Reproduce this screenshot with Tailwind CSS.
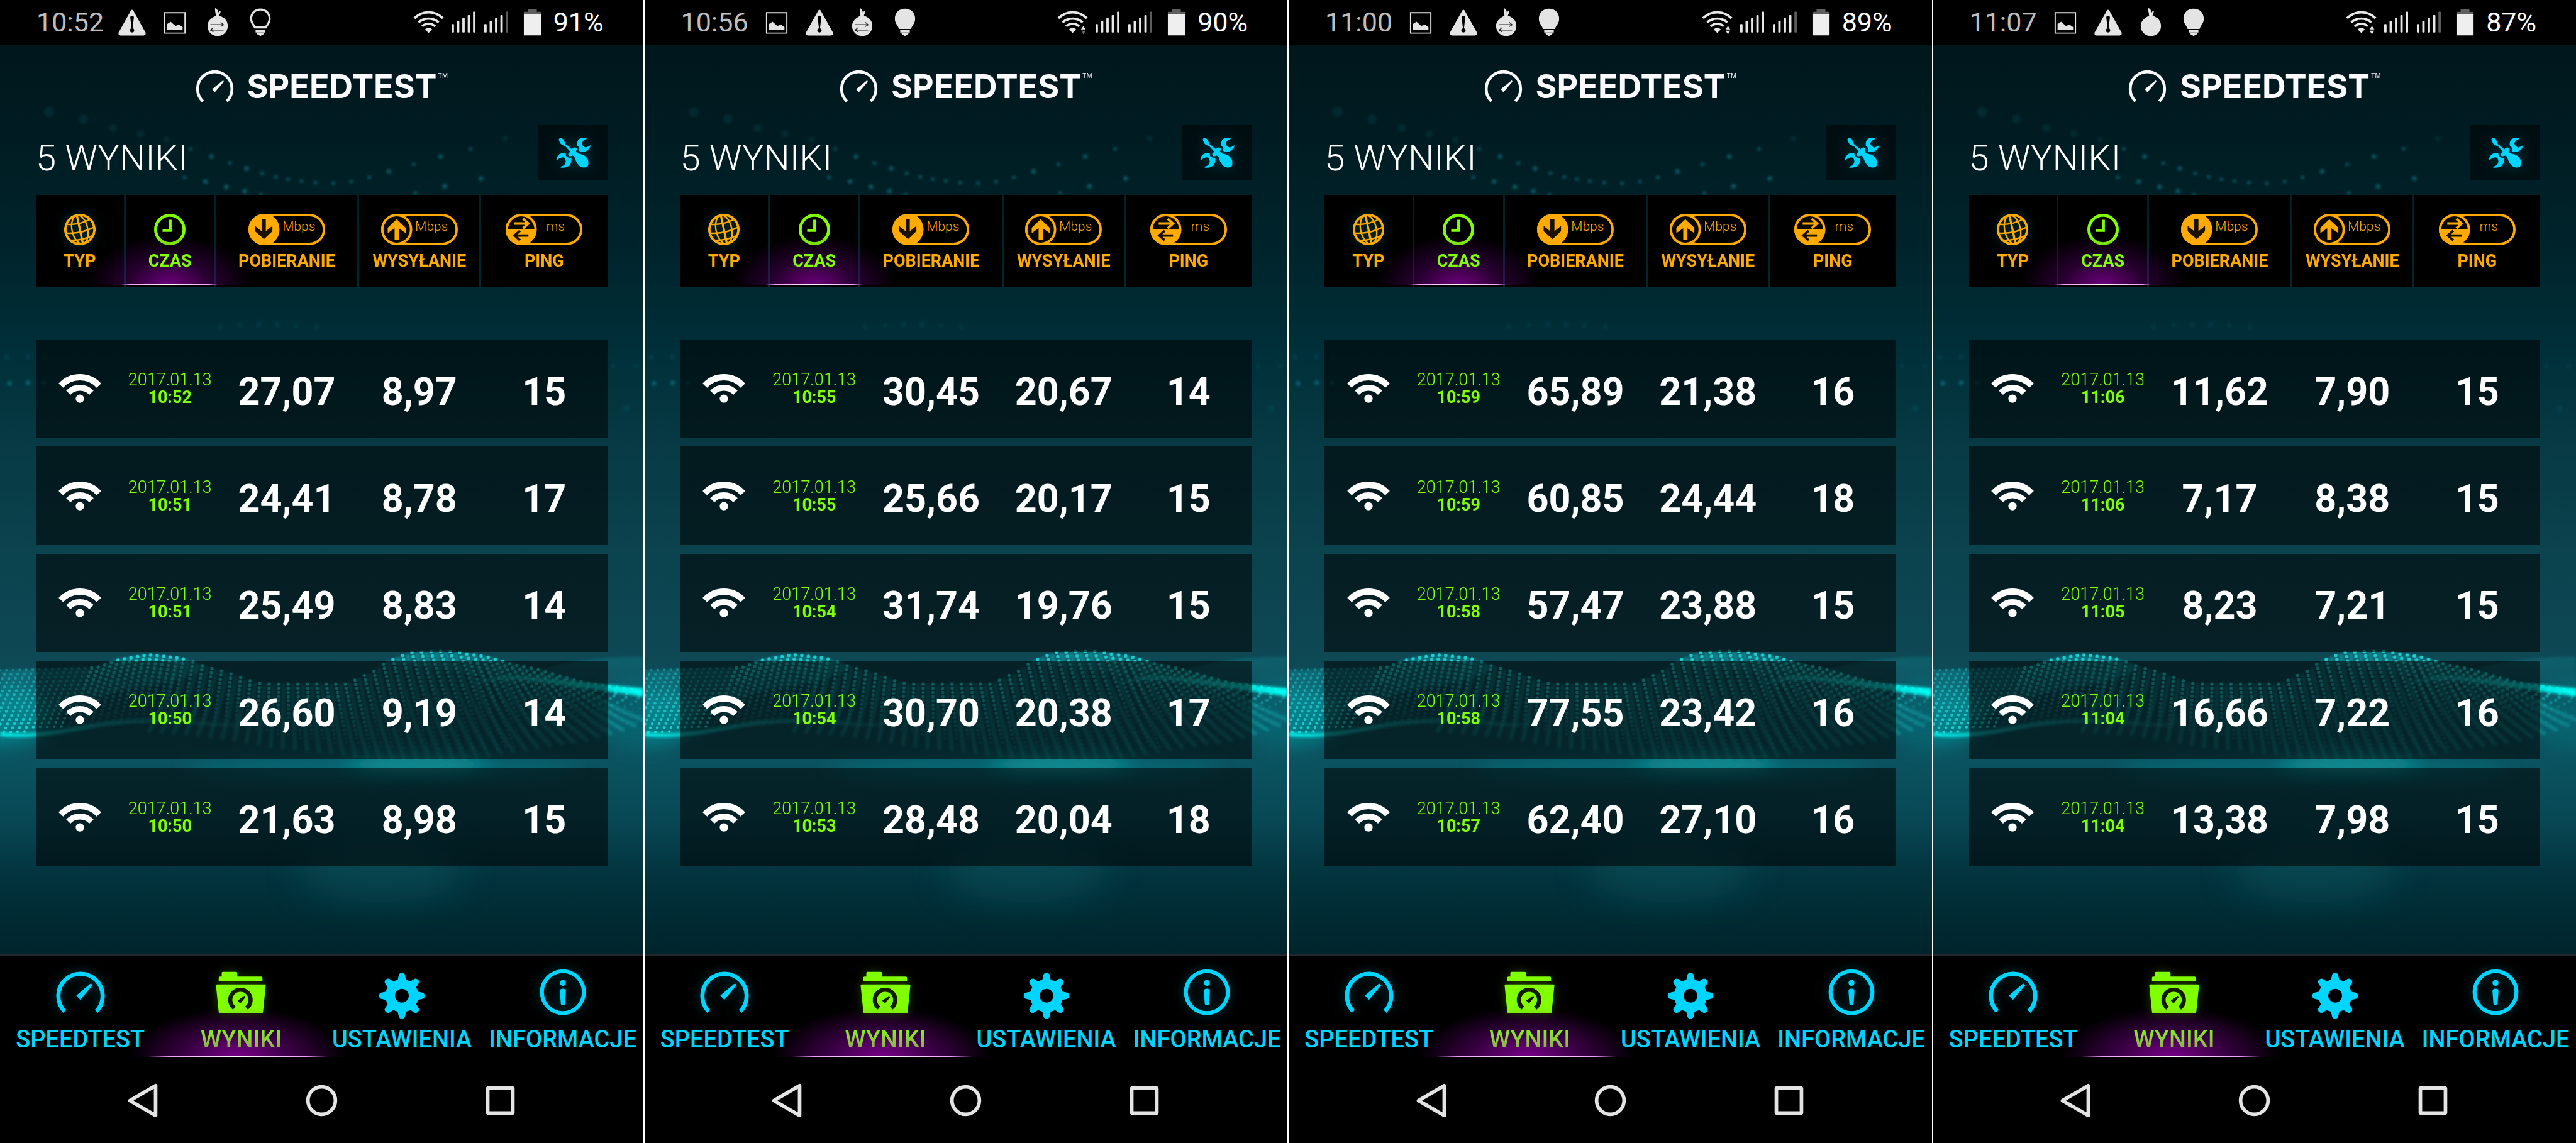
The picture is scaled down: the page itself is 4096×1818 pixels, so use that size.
<!DOCTYPE html>
<html lang="pl">
<head>
<meta charset="utf-8">
<meta name="viewport" content="width=device-width, initial-scale=1">
<title>Speedtest – wyniki</title>
<script src="https://cdn.jsdelivr.net/npm/@tailwindcss/browser@4"></script>
</head>
<body class="bg-white font-['Roboto',sans-serif]">

<!-- Shared drawings -->
<svg class="absolute h-0 w-0" aria-hidden="true">
  <defs>
    <filter id="soft" x="-20%" y="-20%" width="140%" height="140%"><feGaussianBlur stdDeviation="2"/></filter>
    <filter id="softer" x="-50%" y="-50%" width="200%" height="200%"><feGaussianBlur stdDeviation="14"/></filter>
    <filter id="softest" x="-50%" y="-50%" width="200%" height="200%"><feGaussianBlur stdDeviation="30"/></filter>
    <linearGradient id="strand" x1="0" x2="1"><stop offset="0" stop-color="#19b8bc" stop-opacity=".5"/><stop offset="1" stop-color="#00fff6"/></linearGradient>
    <linearGradient id="strandLeft" x1="0" x2="1"><stop offset="0" stop-color="#00f0ea"/><stop offset=".25" stop-color="#0cc0c0" stop-opacity=".8"/><stop offset="1" stop-color="#13969a" stop-opacity=".3"/></linearGradient>
    <linearGradient id="sheet" x1="0" x2="0" y1="0" y2="1"><stop offset="0" stop-color="#14a0aa" stop-opacity=".65"/><stop offset="1" stop-color="#14a0aa" stop-opacity=".15"/></linearGradient>

    <symbol id="warn" viewBox="0 0 48 60"><path fill="#e4e4e4" d="M24 9c1 0 2 1 3 3l19 34c2 3 0 6-3 6H5c-3 0-5-3-3-6l19-34c1-2 2-3 3-3z"/><path d="M21 22c0-4 6-4 6 0l-2 17h-2z"/><circle cx="24" cy="43.500" r="3.500"/></symbol>
    <symbol id="image" viewBox="0 0 48 60"><path fill="none" stroke="#e4e4e4" stroke-width="2" d="M7 14h34v34H7z"/><path fill="#e4e4e4" d="M11 43v-10l6-4 8 7 6-2 6 4v5z"/></symbol>
    <symbol id="onion" viewBox="0 0 48 60"><path fill="#e4e4e4" d="M20 6c4 2 5 5 5 8 1-2 3-4 4-3 0 4-2 5-2 8 9 3 14 9 14 17 0 10-8 17-17 17S7 46 7 36c0-8 6-13 14-17 0-5-2-8-1-13z"/></symbol>
    <symbol id="onionArrows" viewBox="0 0 48 60"><use href="#onion"/><path fill="none" stroke="#222" stroke-width="1.500" d="M12 34h22m-5-4 5 4-5 3M34 43H12m5-4-5 4 5 3"/></symbol>
    <symbol id="bulb" viewBox="0 0 48 60"><path fill="#e4e4e4" d="M24 7c10 0 17 7 17 17 0 8-5 11-7 17H14C12 35 7 32 7 24 7 14 14 7 24 7zM16 43h16v4H16zM18 48.500h12l-2 3h-2l-2 2-2-2h-2z"/></symbol>
    <symbol id="bulbOff" viewBox="0 0 48 60"><path fill="none" stroke="#e4e4e4" stroke-width="3.500" d="M24 8.500c9 0 15.500 6.500 15.500 15.500 0 7-4 10-6.500 14.500H15C12.500 34 8.500 31 8.500 24 8.500 15 15 8.500 24 8.500z"/><path fill="#e4e4e4" d="M16 43h16v4H16zM18 48.500h12l-2 3h-2l-2 2-2-2h-2z"/></symbol>

    <symbol id="wifiSmall" viewBox="692 7 54 60"><g fill="none" stroke="#e8e8e8" stroke-width="4"><path d="M694 30a34 34 0 0 1 48 0"/><path d="M701 37a26 26 0 0 1 34 0"/><path d="M707 43.500a17 17 0 0 1 22 0"/></g><path fill="#e8e8e8" d="M712 49q6-6 12 0l-6 6z"/></symbol>
    <symbol id="wifi" viewBox="0 0 72 48"><g fill="none" stroke="#fff"><path stroke-width="10.500" d="M4 19a43.500 43.500 0 0 1 64 0"/><path stroke-width="10" d="M16.500 31a27 27 0 0 1 39 0"/></g><circle cx="36" cy="41" r="7" fill="#fff"/></symbol>

    <symbol id="logoGauge" viewBox="0 0 64 55"><path fill="none" stroke="#fbfbff" stroke-width="5" d="M11.500 53a29.500 29.500 0 1 1 41 0"/><path fill="#fbfbff" d="M45 18l1.500-1 1 2.500L32 37.500 27.500 32z"/></symbol>
    <symbol id="tools" viewBox="39 30 351 279"><path fill="#00d5ff" d="M144 104Q146 95 156 94L165 100Q176 114 177 125L211 152Q213 147 222 143Q232 141 236 150Q235 157 231 163Q232 167 245 174Q280 178 292 205Q298 235 285 242Q260 248 245 232Q230 215 224 190Q218 184 214 184Q203 190 195 185Q190 178 194 172L203 164L178 137Q160 132 153 123Q148 112 144 104ZM285 95Q258 90 244 103Q234 116 238 135Q247 140 249 148Q245 158 251 163Q265 166 278 164Q300 152 306 133L304 132Q290 140 280 143Q264 138 260 122Q265 108 285 99ZM133 206Q133 186 150 175Q165 168 180 171Q178 183 186 190Q195 196 208 198Q210 220 198 234Q180 248 154 244L153 240Q172 236 178 222Q184 205 172 194Q158 188 135 207Z"/></symbol>

    <symbol id="globe" viewBox="0 0 52 52"><g fill="none" stroke="#fa0" transform="rotate(-12 26 26)"><circle cx="26" cy="26" r="24" stroke-width="4"/><ellipse cx="26" cy="26" rx="13" ry="24" stroke-width="2.500"/><path stroke-width="3.500" d="M26 2v48"/><path stroke-width="2.500" d="M6 13q20 6 40 0M2 27q24 7 48 0M6 40q20 5 40 0"/></g></symbol>
    <symbol id="clock" viewBox="0 0 52 52"><circle cx="26" cy="26" r="23.500" fill="none" stroke="#7fff00" stroke-width="5"/><path fill="#7fff00" d="M24 10h5v20H14v-5h10z"/></symbol>
    <symbol id="pillDown" viewBox="0 0 128 52"><rect x="2" y="2" width="124" height="48" rx="24" fill="none" stroke="#fa0" stroke-width="4"/><path fill="#fa0" d="M26 0h18l-3 4q11 9 11 22T41 48l3 4H26a26 26 0 0 1 0-52z"/><path fill="#1a1100" d="M11 20l11 9V9h7v20l11-9v9L26 42 11 29z"/></symbol>
    <symbol id="pillUp" viewBox="0 0 128 52"><rect x="2" y="2" width="124" height="48" rx="24" fill="none" stroke="#fa0" stroke-width="4"/><circle cx="26" cy="26" r="24" fill="#0a0600" stroke="#fa0" stroke-width="4"/><path fill="#fa0" d="M36 0h10l-4 5zM36 52h10l-4-5zM26 9l15 14v9l-11.500-8v19h-7V24L11 32v-9z"/></symbol>
    <symbol id="pillPing" viewBox="0 0 128 52"><rect x="2" y="2" width="124" height="48" rx="24" fill="none" stroke="#fa0" stroke-width="4"/><circle cx="26" cy="26" r="24" fill="#0a0600" stroke="#fa0" stroke-width="4"/><path fill="#fa0" d="M36 0h10l-4 5zM36 52h10l-4-5zM2 25h48a24 24 0 0 1-48 0z"/><path fill="none" stroke="#fa0" stroke-width="4" d="M14 16h24M29 8l9 8-9 8"/><path fill="none" stroke="#1a1100" stroke-width="4" d="M38 36H15M24 28l-9 8 9 8"/></symbol>

    <symbol id="navGauge" viewBox="0 0 84 84"><path fill="none" stroke="#00d5ff" stroke-width="7" d="M15.500 72a37 37 0 1 1 53 0"/><path fill="#00d5ff" d="M57.500 26.500L60 25.700l2 3L41.700 52.700 35 45.700z"/></symbol>
    <symbol id="navFolder" viewBox="0 0 84 84"><path fill="#7fff00" d="M5 21v-5q0-2 2-2h3V8q0-2 2-2h22q2 0 2 2v6h40q2 0 2 2v5zM2 27h80q2 0 1.500 2L79 73q0 2-2 2H7q-2 0-2-2L.5 29Q0 27 2 27z"/><path fill="none" stroke="#141a00" stroke-width="7" d="M31 66.500a17 17 0 1 1 20.500 0"/><path fill="#141a00" d="M48 46l2 2-9 11-4.500-5z"/></symbol>
    <symbol id="navGear" viewBox="0 0 84 84"><g fill="#00d5ff"><path id="tooth" d="M34 24l3-13q1-3 5-3t5 3l3 13z"/><use href="#tooth" transform="rotate(45 42 46)"/><use href="#tooth" transform="rotate(90 42 46)"/><use href="#tooth" transform="rotate(135 42 46)"/><use href="#tooth" transform="rotate(180 42 46)"/><use href="#tooth" transform="rotate(225 42 46)"/><use href="#tooth" transform="rotate(270 42 46)"/><use href="#tooth" transform="rotate(315 42 46)"/></g><circle cx="42" cy="46" r="19.500" fill="none" stroke="#00d5ff" stroke-width="16"/></symbol>
    <symbol id="navInfo" viewBox="0 0 84 84"><circle cx="42" cy="40" r="35" fill="none" stroke="#00d5ff" stroke-width="6.500"/><circle cx="42" cy="24.500" r="5" fill="#00d5ff"/><path fill="#00d5ff" d="M37 38q0-4 5-4t5 4l-1.500 21q-.5 3-3.500 3t-3.500-3z"/></symbol>

    <symbol id="sysBack" viewBox="0 0 60 60"><path fill="none" stroke="#e4e4e4" stroke-width="6" stroke-linejoin="round" d="M51 5v50L8 30z"/></symbol>
    <symbol id="sysHome" viewBox="0 0 60 60"><circle cx="30" cy="30" r="23" fill="none" stroke="#e4e4e4" stroke-width="6"/></symbol>
    <symbol id="sysRecent" viewBox="0 0 60 60"><rect x="9" y="9" width="42" height="42" rx="1" fill="none" stroke="#e4e4e4" stroke-width="6"/></symbol>

    <symbol id="wave" viewBox="0 75 1080 1527" preserveAspectRatio="none">
      <g filter="url(#softer)">
        <ellipse cx="700" cy="1284" rx="120" ry="15" fill="#0fb4b4" opacity=".75"/>
        <ellipse cx="640" cy="1290" rx="330" ry="22" fill="#0f8c96" opacity=".35"/>
        <ellipse cx="0" cy="1205" rx="90" ry="50" fill="#0ca5ac" opacity=".5"/>
        <ellipse cx="1075" cy="1200" rx="80" ry="60" fill="#0c8c96" opacity=".3"/>
      </g>
      <ellipse filter="url(#softest)" cx="640" cy="1465" rx="140" ry="50" fill="#08616a" opacity=".4"/>
      <path filter="url(#soft)" fill="url(#sheet)" opacity=".7" d="M0 1126Q100 1122 160 1122Q210 1098 250 1100Q290 1100 350 1120Q300 1150 200 1160L0 1232z"/>
      <path filter="url(#soft)" fill="url(#sheet)" opacity=".5" d="M650 1112Q690 1090 740 1094Q820 1096 900 1128Q960 1104 1080 1103V1162L850 1140z"/>
      <g id="dots"></g>
      <path filter="url(#soft)" fill="none" stroke="url(#strandLeft)" stroke-width="7" d="M0 1233Q50 1240 140 1222T330 1214T400 1204"/>
      <path filter="url(#soft)" fill="url(#strand)" d="M790 1150Q840 1128 900 1138L1080 1156V1170Q960 1152 880 1142Q830 1140 790 1150z"/>
    </symbol>
  </defs>
</svg>

<div id="screens" class="grid min-h-screen grid-cols-4 gap-[2px]"></div>

<script>
// Dotted wave: columns of dots hanging from a crest line down to a trough line.
const crest = [[0,1126],[160,1122],[205,1107],[250,1100],[300,1105],[360,1124],[440,1149],[580,1149],[620,1132],[655,1109],[690,1096],[750,1094],[810,1102],[870,1118],[1000,1150],[1080,1160]];
const trough = [[0,1232],[50,1235],[140,1221],[300,1212],[400,1222],[520,1245],[650,1262],[760,1262],[900,1235],[1080,1168]];
const at = (pts, x) => {
  for (let i = 1; i < pts.length; i++) if (x <= pts[i][0]) {
    const [a, b] = [pts[i - 1], pts[i]];
    let t = (x - a[0]) / (b[0] - a[0]);
    t = t * t * (3 - 2 * t) * .4 + t * .6;
    return a[1] + (b[1] - a[1]) * t;
  }
  return pts[pts.length - 1][1];
};
let dots = '';
for (let u = 0; u <= 1060; u += u < 300 ? 11 : u < 760 ? 16 : 12) {
  const top = at(crest, u), low = at(trough, u);
  for (let y = top, k = 0; y < low; y += 7, k++) {
    const t = (y - top) / (low - top);
    const lean = u < 480 ? -(480 - u) * .12 * t : (u - 480) * .22 * t;
    const edge = u < 150 ? .35 + .6 * t : Math.max(u > 800 ? .06 : .14, .95 - t * (u > 600 ? 1.2 : .9));
    dots += `<circle cx="${(u + lean).toFixed(1)}" cy="${y.toFixed(1)}" r="${u < 150 ? 2.4 : 2.9}" opacity="${edge.toFixed(2)}"/>`;
  }
}
let streaks = '';
for (let u = 300; u < 960; u += 16) {
  const a = at(crest, u), b = at(trough, Math.min(u + 40, 1000)) + 14, lean = (u - 480) * .28;
  streaks += `<path d="M${u} ${a}Q${u + lean * .3} ${(a + b) / 2} ${u + lean} ${b}"/>`;
}
const sparks = [[320,250,3],[355,263,4],[386,274,3],[414,283,4],[440,291,3],[463,297,3],[484,301,3],[506,304,3],[530,307,3],[560,308,3],[590,305,3],[620,298,3],[653,288,4],[695,276,3],[740,263,4],[790,250,3],[310,298,3],[345,305,4],[380,314,4],[411,321,4],[438,327,3],[698,324,3],[747,313,4],[808,300,4],[16,644,4],[47,643,4],[73,643,3]];
const hazes = [[848,233,5],[280,235,5],[236,225,6],[190,215,7],[140,200,8],[82,188,9],[11,600,5],[47,599,5],[75,600,3],[1030,615,4],[1068,615,4],[1052,686,6],[370,549,4],[404,546,4],[435,545,5],[466,545,5],[497,547,4],[532,549,4]];
const discs = (list) => list.map(([x, y, r]) => `<circle cx="${x}" cy="${y}" r="${r}"/>`).join('');
document.getElementById('dots').innerHTML =
  `<g fill="none" stroke="#1cc3c3" stroke-width="6" opacity=".38" filter="url(#soft)">${streaks}</g>
   <g fill="#1fd6d6">${dots}</g>
   <g fill="#12808c" opacity=".6" filter="url(#soft)">${discs(sparks)}</g>
   <g fill="#0d6a76" opacity=".2" filter="url(#soft)">${discs(hazes)}</g>`;

const screens = [
  { time: '10:52', battery: '91%', icons: ['warn', 'image', 'onionArrows', 'bulbOff'], arrows: null, rows: [
    ['10:52', '27,07', '8,97', '15'], ['10:51', '24,41', '8,78', '17'], ['10:51', '25,49', '8,83', '14'], ['10:50', '26,60', '9,19', '14'], ['10:50', '21,63', '8,98', '15']] },
  { time: '10:56', battery: '90%', icons: ['image', 'warn', 'onionArrows', 'bulb'], arrows: '#666', rows: [
    ['10:55', '30,45', '20,67', '14'], ['10:55', '25,66', '20,17', '15'], ['10:54', '31,74', '19,76', '15'], ['10:54', '30,70', '20,38', '17'], ['10:53', '28,48', '20,04', '18']] },
  { time: '11:00', battery: '89%', icons: ['image', 'warn', 'onionArrows', 'bulb'], arrows: '#e8e8e8', rows: [
    ['10:59', '65,89', '21,38', '16'], ['10:59', '60,85', '24,44', '18'], ['10:58', '57,47', '23,88', '15'], ['10:58', '77,55', '23,42', '16'], ['10:57', '62,40', '27,10', '16']] },
  { time: '11:07', battery: '87%', icons: ['image', 'warn', 'onion', 'bulb'], arrows: '#e8e8e8', rows: [
    ['11:06', '11,62', '7,90', '15'], ['11:06', '7,17', '8,38', '15'], ['11:05', '8,23', '7,21', '15'], ['11:04', '16,66', '7,22', '16'], ['11:04', '13,38', '7,98', '15']] },
];

const bars = (last) => `<svg class="h-[57px] w-[40px]" viewBox="756 7 42 60">
  ${[40, 35, 30, 25, 19].map((y, i) => `<rect x="${757 + i * 9}" y="${y}" width="4" height="${54 - y}" rx="1" fill="${i === 4 ? last : '#e8e8e8'}"/>`).join('')}</svg>`;

const pill = (id, unit, x) => `<svg class="h-[50px] w-[122px]" viewBox="0 0 128 52"><use href="#${id}"/><text x="${x}" y="28" fill="#fa0" font-size="22" font-weight="300">${unit}</text></svg>`;

const screen = (s) => `
<section class="flex min-w-0 flex-col overflow-hidden bg-black">
  <div class="flex h-[71px] items-center pr-[63px] pl-[58px] text-[43px] leading-none">
    <span class="w-[118px] text-[#bdbdbd]">${s.time}</span>
    ${s.icons.map(i => `<svg class="h-[57px] w-[68px]"><use href="#${i}"/></svg>`).join('')}
    <div class="ml-auto flex items-center">
      <svg class="h-[57px] w-[51px]" viewBox="692 7 54 60"><use href="#wifiSmall" x="692" y="7" width="54" height="60"/>${s.arrows ? `<path fill="#e8e8e8" d="M732 49l4-6 4 6z"/><path fill="${s.arrows}" d="M732 51l4 6 4-6z"/>` : ''}</svg>
      <span class="ml-[9px] flex gap-[12px]">${bars('#e8e8e8')}${bars('#5c5c5c')}</span>
      <svg class="mr-[18px] ml-[23px] h-[57px] w-[30px]" viewBox="877 7 32 60"><path fill="#5f5f5f" d="M885 15h15v4h7v6h-29v-6h7z"/><path fill="#efefef" d="M878 23h29v36h-29z"/></svg>
      <span class="text-white">${s.battery}</span>
    </div>
  </div>

  <main class="relative flex-1 bg-[linear-gradient(180deg,#00171c_0%,#001c22_10%,#00252d_24%,#00303a_34%,#073a44_44%,#0b434e_56%,#0e4855_67%,#0b5360_79%,#084855_85%,#02323c_92%,#00242b_100%)]">
    <svg class="absolute inset-0 h-full w-full" aria-hidden="true"><use href="#wave"/></svg>
    <div class="relative px-[57px] pt-[41px]">
      <h1 class="flex h-[51px] items-center justify-center font-['Inter',sans-serif] text-[52px] font-bold text-[#fbfbff]">
        <svg class="mr-[21px] h-[51px] w-[61px]" aria-hidden="true"><use href="#logoGauge"/></svg>SPEEDTEST<sup class="ml-[2px] self-start pt-[8px] text-[10px] leading-[10px] font-normal">TM</sup>
      </h1>
      <div class="mt-[36px] flex h-[88px] items-end justify-between">
        <h2 class="pb-[6px] text-[58px] leading-[60px] font-light text-white">5 WYNIKI</h2>
        <button class="h-[88px] w-[111px] bg-black/50" aria-label="Narzędzia"><svg class="h-full w-full drop-shadow-[0_0_10px_#00d5ff40]"><use href="#tools"/></svg></button>
      </div>
      <table class="mt-[23px] block w-full text-center">
        <thead class="block">
          <tr class="relative grid h-[147px] grid-cols-[148fr_149fr_238fr_202fr_212fr] gap-[3px] text-[27px] leading-[28px] text-[#fa0] *:flex *:flex-col *:items-center *:gap-[11px] *:bg-black *:pt-[30px] *:font-bold">
            <th><svg class="h-[50px] w-[50px] drop-shadow-[0_0_8px_#00d5ff50]"><use href="#globe"/></svg>TYP</th>
            <th class="text-[#7fff00]"><svg class="h-[50px] w-[50px]"><use href="#clock"/></svg><span class="relative z-10">CZAS</span>
              <i class="absolute bottom-[3px] left-[80px] h-[80px] w-[265px] bg-[radial-gradient(ellipse_50%_100%_at_50%_100%,#b000c8a0,#70008858_50%,transparent)]"></i>
              <i class="absolute bottom-[3px] left-[135px] h-[3px] w-[155px] bg-[linear-gradient(90deg,transparent,#f0a0ff_10%,#fff_50%,#f0a0ff_90%,transparent)]"></i>
            </th>
            <th>${pill('pillDown', 'Mbps', 57)}POBIERANIE</th>
            <th>${pill('pillUp', 'Mbps', 57)}WYSYŁANIE</th>
            <th>${pill('pillPing', 'ms', 68)}PING</th>
          </tr>
        </thead>
        <tbody class="mt-[83px] grid h-[838px] grid-rows-5 gap-[14px]">
          ${s.rows.map(([t, d, u, p]) => `
          <tr class="grid grid-cols-[148fr_149fr_238fr_202fr_212fr] items-center gap-[3px] bg-black/55 text-[61px] leading-[60px] font-bold text-white">
            <td class="flex justify-center"><svg class="h-[46px] w-[68px]" role="img" aria-label="Wi-Fi"><use href="#wifi"/></svg></td>
            <td class="text-[27px] leading-[28px] text-[#7fff00]"><span class="block font-light">2017.01.13</span>${t}</td>
            <td class="pt-[9px]">${d}</td>
            <td class="pt-[9px]">${u}</td>
            <td class="pt-[9px]">${p}</td>
          </tr>`).join('')}
        </tbody>
      </table>
    </div>
  </main>

  <nav class="relative grid h-[165px] grid-cols-4 border-t-[3px] border-[#22272e] text-[38px] leading-[40px] font-medium whitespace-nowrap text-[#00d5ff] *:flex *:flex-col *:items-center *:gap-[13px] *:pt-[20px]">
    <a href="#speedtest"><svg class="h-[80px] w-[80px] drop-shadow-[0_0_8px_#00d5ff50]"><use href="#navGauge"/></svg>SPEEDTEST</a>
    <a href="#wyniki" class="text-[#7fff00]" aria-current="page"><svg class="h-[80px] w-[80px] drop-shadow-[0_0_8px_#7fff0040]"><use href="#navFolder"/></svg><span class="relative z-10 bg-linear-to-b from-[#80f010] from-20% to-[#90b04c] to-80% bg-clip-text text-transparent">WYNIKI</span>
      <i class="absolute bottom-0 left-[20%] h-[80px] w-[34%] bg-[radial-gradient(ellipse_50%_100%_at_50%_100%,#b000c8b0,#80009870_50%,transparent)]"></i>
      <i class="absolute bottom-0 left-[23%] h-[3px] w-[28%] bg-[linear-gradient(90deg,transparent,#f0a0ff_12%,#fff_50%,#f0a0ff_88%,transparent)]"></i>
    </a>
    <a href="#ustawienia"><svg class="h-[80px] w-[80px]"><use href="#navGear"/></svg>USTAWIENIA</a>
    <a href="#informacje"><svg class="h-[80px] w-[80px] drop-shadow-[0_0_8px_#00d5ff50]"><use href="#navInfo"/></svg>INFORMACJE</a>
  </nav>

  <div class="grid h-[136px] grid-cols-3 place-items-center px-[85px]">
    <button aria-label="Wstecz"><svg class="h-[57px] w-[57px]"><use href="#sysBack"/></svg></button>
    <button aria-label="Ekran główny"><svg class="h-[57px] w-[57px]"><use href="#sysHome"/></svg></button>
    <button aria-label="Ostatnie"><svg class="h-[57px] w-[57px]"><use href="#sysRecent"/></svg></button>
  </div>
</section>`;

document.getElementById('screens').innerHTML = screens.map(screen).join('');
</script>
</body>
</html>
